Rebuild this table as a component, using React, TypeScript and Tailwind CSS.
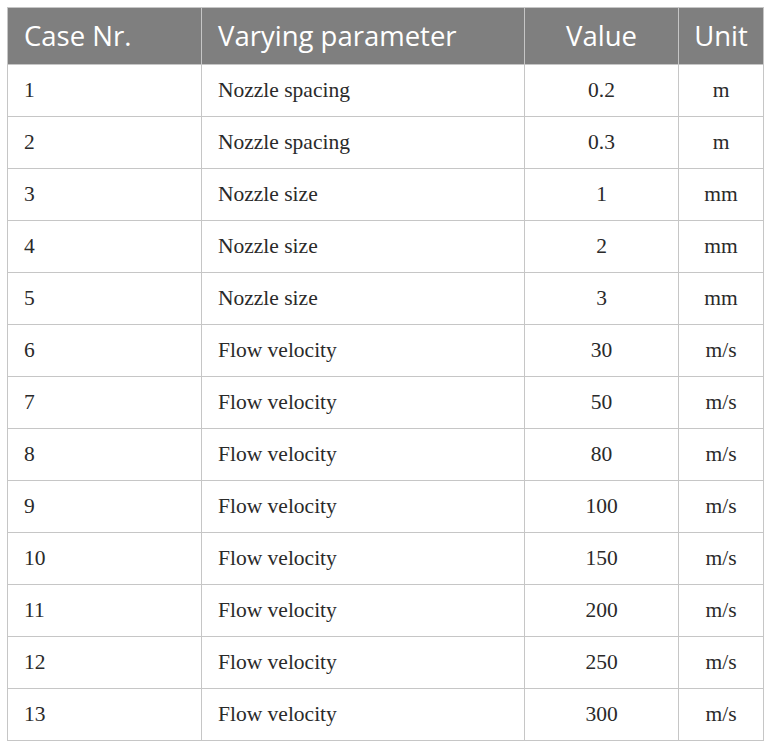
const rows: [string, string, string, string][] = [
  ["1", "Nozzle spacing", "0.2", "m"],
  ["2", "Nozzle spacing", "0.3", "m"],
  ["3", "Nozzle size", "1", "mm"],
  ["4", "Nozzle size", "2", "mm"],
  ["5", "Nozzle size", "3", "mm"],
  ["6", "Flow velocity", "30", "m/s"],
  ["7", "Flow velocity", "50", "m/s"],
  ["8", "Flow velocity", "80", "m/s"],
  ["9", "Flow velocity", "100", "m/s"],
  ["10", "Flow velocity", "150", "m/s"],
  ["11", "Flow velocity", "200", "m/s"],
  ["12", "Flow velocity", "250", "m/s"],
  ["13", "Flow velocity", "300", "m/s"],
]

export default function App() {
  return (
    <div className="bg-white w-[772px] h-[749px] pl-[7px] pt-[7px]">
      <table className="border-collapse table-fixed w-[757px]">
        <colgroup>
          <col className="w-[194px]" />
          <col className="w-[323px]" />
          <col className="w-[154px]" />
          <col className="w-[85px]" />
        </colgroup>
        <thead>
          <tr className="h-[57px] bg-[#7f7f7f] text-white text-[27.5px] font-['Open_Sans',sans-serif]">
            <th className="border border-[#c6c6c6] text-left font-normal px-4">Case Nr.</th>
            <th className="border border-[#c6c6c6] text-left font-normal px-4">Varying parameter</th>
            <th className="border border-[#c6c6c6] text-center font-normal">Value</th>
            <th className="border border-[#c6c6c6] text-center font-normal">Unit</th>
          </tr>
        </thead>
        <tbody className="text-[21.5px] text-[#2a2a2a] font-['Liberation_Serif',serif]">
          {rows.map((r) => (
            <tr key={r[0]} className="h-[52px]">
              <td className="border border-[#c6c6c6] px-4">{r[0]}</td>
              <td className="border border-[#c6c6c6] px-4">{r[1]}</td>
              <td className="border border-[#c6c6c6] text-center">{r[2]}</td>
              <td className="border border-[#c6c6c6] text-center">{r[3]}</td>
            </tr>
          ))}
        </tbody>
      </table>
    </div>
  )
}
